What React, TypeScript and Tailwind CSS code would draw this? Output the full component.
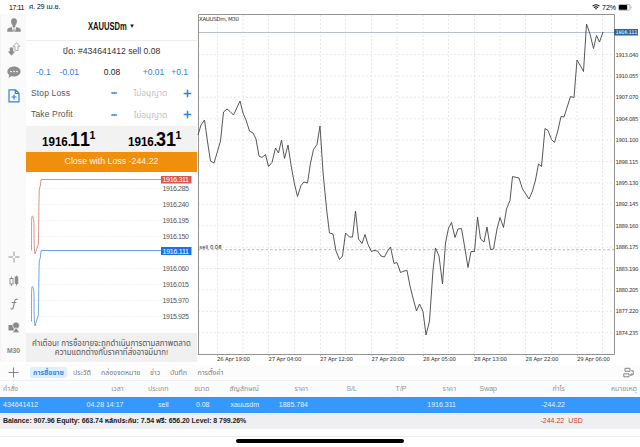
import React from "react";

const blue = "#2f82dc";

const gridX = [217.5, 243, 268.5, 294.5, 320.5, 345.5, 371.5, 397, 423, 448.5, 474.5, 500, 525.5, 551.5, 577, 602.5];

const priceLabels = [
  "1913.040", "1910.055", "1907.070", "1904.085", "1901.100", "1898.115", "1895.130",
  "1892.145", "1889.160", "1886.175", "1883.190", "1880.205", "1877.220", "1874.235",
];

const timeLabels = [
  { x: 217, text: "26 Apr 19:00" },
  { x: 268.5, text: "27 Apr 04:00" },
  { x: 320, text: "27 Apr 12:00" },
  { x: 371.5, text: "27 Apr 20:00" },
  { x: 423, text: "28 Apr 05:00" },
  { x: 474, text: "28 Apr 13:00" },
  { x: 525.5, text: "28 Apr 22:00" },
  { x: 577, text: "29 Apr 06:00" },
];

const closePrices =
  "198,135 201,125 204.5,120 208,145 210.5,161 214,163 217,153 220.5,141 223.5,112 227,109 230,111.5 233.5,115 240,101 243,113 246,120 249.5,131 253,133 256,139 259,156 262,157.5 265.5,154.5 268.5,166.5 272,162.5 275.5,148 278.5,153 281.5,140 284.5,158.5 288,145 291.5,168 294.5,184 297.5,196.5 301,185.5 304,182 307.5,183 310.5,163 313.5,149.5 317,144.5 320,126 323,172 325,193 327,213 329.5,233 333,234 336,251 339.5,259.5 342.5,256 345.5,233 349.5,237 352.5,237 355.5,211 358.5,239 362,243.5 365,234.5 368,244.5 371.5,251.5 374,250.5 377.5,251 381,256 384.5,257 387.5,251 390.5,247 394,263.5 397,262.5 400.5,272.5 404,271 407,270.5 410,286 413,298 416.5,311 419.5,304 423,311.5 426,335 429.5,321 433,270 435.5,248 439,256 442.5,284 445.5,243 448.5,228 451.5,222.5 455,237.5 458,229 461.5,228.5 464.5,246 468,267.5 471,251.5 474.5,251.5 477.5,217 480.5,239 484,242 487,227 490.5,249.5 493.5,249 497,229 500,217.5 503.5,227.5 506.5,209 510,200.5 512.5,176.5 519,178 522.5,189 529,199 532.5,191 535.5,180 538.5,164 541.5,166.5 545,128.5 548,130.5 551.5,139.5 554.5,142.5 558,130 561,116.5 564,117 567.5,106 570.5,96.5 574,97.5 577,60 580,65 583.5,71.5 586.5,24 590,34 593.5,48.5 596.5,35.5 599.5,42 603,32";

const tickLabels = [
  { y: 188.5, text: "1916.285" },
  { y: 204.5, text: "1916.240" },
  { y: 220.5, text: "1916.195" },
  { y: 236.5, text: "1916.150" },
  { y: 268.5, text: "1916.060" },
  { y: 284.5, text: "1916.015" },
  { y: 300.5, text: "1915.970" },
  { y: 316.5, text: "1915.925" },
];

function StatusBar() {
  return (
    <div className="flex h-[14px] shrink-0 items-center justify-between pl-[9px] pr-[8px] text-[7px] text-black">
      <div className="flex items-center gap-[5px] leading-none">
        <span className="tracking-[-0.4px]">17:11</span>
        <span className="text-[6.8px]">ศ. 29 เม.ย.</span>
      </div>
      <div className="flex items-center gap-[2px] leading-none">
        <svg width="8" height="6" viewBox="0 0 8 6" fill="none" stroke="#000">
          <path d="M.6 2.2Q4-.7 7.4 2.2M1.9 3.6Q4 1.9 6.1 3.6" strokeWidth="1.1" />
          <path d="M2.9 4.6Q4 3.8 5.1 4.6L4 5.8z" fill="#000" stroke="none" />
        </svg>
        <span>72%</span>
        <svg width="14" height="7" viewBox="0 0 14 7">
          <rect x=".4" y=".5" width="11.6" height="5.8" rx="1.4" fill="#fff" stroke="#999" strokeWidth=".7" />
          <rect x="1" y="1.1" width="8.2" height="4.6" rx=".7" fill="#000" />
          <path d="M12.8 2.4v2q.8-.3.8-1t-.8-1" fill="#999" />
        </svg>
      </div>
    </div>
  );
}

function Rail() {
  return (
    <div className="flex w-[26px] shrink-0 flex-col items-center justify-between border-l border-[#f4f4f4] bg-[#fafafa] pb-[3px] pt-[3px]">
      <div className="flex flex-col items-center gap-[7.5px]">
        <svg width="16" height="16" viewBox="0 0 16 16" fill="#8e8e8e">
          <path d="M8 1.2c-2.2 0-3.2 1.5-2.9 3.6.2 1.7.8 2.8 1.5 3.5v1.4L8 11l1.4-1.3V8.3c.7-.7 1.3-1.8 1.5-3.5.3-2.1-.7-3.6-2.9-3.6z" />
          <path d="M1.3 14.7v-2.2c.2-1.2 2.4-1.9 4.5-2.5L7 14.7zM14.7 14.7v-2.2c-.2-1.2-2.4-1.9-4.5-2.5L9 14.7zM7.6 11.4h.8l.4 3.3H7.2z" />
        </svg>
        <svg width="16" height="16" viewBox="0 0 16 16">
          <path d="M3.8 6.5h3.4v4h2L5.5 14.8 1.8 10.5h2z" fill="#8e8e8e" />
          <path d="M10.5 1.7l3.3 3.7H12v4H9v-4H7.2z" fill="#fff" stroke="#999" strokeWidth=".8" />
        </svg>
        <svg width="16" height="16" viewBox="0 0 16 16">
          <path d="M8 2.5c3.7 0 6.6 2.2 6.6 5s-2.9 5-6.6 5c-.9 0-1.7-.1-2.4-.4-.8.8-2 1.500-3.300 1.600.6-.7.9-1.600.9-2.700C2 10.100 1.400 8.900 1.400 7.500c0-2.800 2.900-5 6.600-5z" fill="#8e8e8e" />
          <g fill="#fff">
            <circle cx="5" cy="7.5" r=".85" />
            <circle cx="8" cy="7.5" r=".85" />
            <circle cx="11" cy="7.5" r=".85" />
          </g>
        </svg>
        <svg width="16" height="16" viewBox="0 0 16 16" fill="none" stroke={blue} strokeWidth="1.2">
          <path d="M3 1.800h6.500L13 5.300v8.500H3zM9.300 2v3.500H13M8 6.500v5M5.500 9h5" />
        </svg>
      </div>
      <div className="flex flex-col items-center gap-[7.5px]">
        <svg width="16" height="16" viewBox="0 0 16 16" stroke="#888" strokeWidth=".9">
          <path d="M8 2.500v4.500M8 9v4.500M2.500 8h4.500M9 8h4.500" />
        </svg>
        <svg width="16" height="16" viewBox="0 0 16 16" stroke="#888" strokeWidth=".9">
          <path d="M5.500 3.500v9.500" />
          <rect x="4" y="5.500" width="3" height="5.500" fill="#fafafa" />
          <path d="M10.500 2.500v10" />
          <rect x="9.200" y="4" width="2.600" height="6.500" fill="#888" />
        </svg>
        <svg width="16" height="16" viewBox="0 0 16 16" fill="none" stroke="#858585" strokeWidth="1.1" strokeLinecap="round">
          <path d="M11.200 3.500C9.900 2.600 9 3.500 8.700 5L7.300 11.300C7 12.900 6.100 13.500 5 12.800M6 6.500h4" />
        </svg>
        <svg width="16" height="16" viewBox="0 0 16 16" fill="#888">
          <rect x="2.500" y="5" width="5.300" height="5.500" />
          <circle cx="10" cy="5.500" r="3.400" stroke="#fafafa" strokeWidth=".7" />
          <path d="M10 7.500l3.800 5.200H6.400z" stroke="#fafafa" strokeWidth=".7" />
        </svg>
        <span className="flex h-[16px] items-center text-[6.8px] font-bold text-[#888]">M30</span>
      </div>
    </div>
  );
}

function StopRow({ label }: { label: string }) {
  return (
    <div className="flex h-[21.5px] items-center pl-[5px] pr-[5px] text-[8.5px] text-[#555]">
      <span className="w-[79px] tracking-[0.15px]">{label}</span>
      <svg width="8" height="8" viewBox="0 0 8 8" stroke={blue} strokeWidth="1.5"><path d="M1.300 4h5.600" /></svg>
      <span className="flex-1 text-center text-[8.3px] text-[#c0c0c0]">ไม่อนุญาต</span>
      <svg width="9" height="9" viewBox="0 0 9 9" stroke={blue} strokeWidth="1.5"><path d="M.7 4.500h7.600M4.500.7v7.600" /></svg>
    </div>
  );
}

function Quote({ big }: { big: string }) {
  return (
    <div className="flex h-[20px] w-[52px] items-baseline whitespace-nowrap font-bold leading-[20px] text-black">
      <span className="w-[28px] origin-left scale-x-[.86] text-[13.5px]">1916.</span>
      <span className="w-[19.5px] origin-left scale-x-[.92] text-[19.5px] [font-kerning:none]">{big}</span>
      <span className="self-start text-[10.5px] leading-[13px]">1</span>
    </div>
  );
}

function TickChart() {
  return (
    <svg width="171" height="161" viewBox="26 172 171 161" className="block">
      {tickLabels.map((t) => (
        <g key={t.text}>
          <path d={`M34 ${t.y}H160`} stroke="#e5e5e5" strokeWidth=".6" strokeDasharray="1.5 1.5" />
          <text x="162.5" y={t.y + 2.7} fontSize="7" fill="#555" textLength="26.5">{t.text}</text>
        </g>
      ))}
      <path d="M31.5 250.5C31.5 232 31.2 216 32.3 216S34 221 34 229s-.2 18 1 25l1.8-5 1.5-5c.6-16 .3-34 1-55l1.2-4 .5-5.500H161" fill="none" stroke="#cf7772" strokeWidth=".8" />
      <path d="M31.5 321.5C31.5 303 31.2 286.5 32.3 286.5S34 291 34 299s-.2 20 1 27l1.8-6 1.5-5c.6-16 .3-34 1-54l1.2-4 .5-6.500H161" fill="none" stroke="#4c91d7" strokeWidth=".8" />
      <rect x="161" y="176" width="30.5" height="7.5" fill="#d9574f" />
      <text x="162.5" y="182.3" fontSize="7" fill="#fff" textLength="26.5">1916.311</text>
      <rect x="161" y="247" width="30.5" height="8" fill="#1874dc" />
      <text x="162.5" y="253.6" fontSize="7" fill="#fff" textLength="26.5">1916.111</text>
    </svg>
  );
}

function OrderPanel() {
  return (
    <div className="flex w-[171px] shrink-0 flex-col bg-white">
      <div className="flex h-[26.5px] items-center border-b border-[#eee] pl-[62px] text-[10px] font-bold text-[#111]">
        <span className="w-[41px] origin-left scale-x-[.76]">XAUUSDm</span>
        <span className="text-[6px]">▼</span>
      </div>
      <div className="flex h-[21px] items-center justify-center text-[8.6px] text-[#333]">ปิด: #434641412 sell 0.08</div>
      <div className="flex h-[21px] items-center justify-between pl-[10px] pr-[9px] text-[8.5px] text-[#2f82dc]">
        <div className="flex w-[50px] gap-[9px]">
          <span>-0.1</span>
          <span>-0.01</span>
        </div>
        <span className="text-[#222]">0.08</span>
        <div className="flex w-[50px] justify-end gap-[7px]">
          <span>+0.01</span>
          <span>+0.1</span>
        </div>
      </div>
      <StopRow label="Stop Loss" />
      <StopRow label="Take Profit" />
      <div className="flex h-[26.5px] items-center justify-between bg-[#f2f2f2] pl-[16px] pr-[17px]">
        <Quote big="11" />
        <Quote big="31" />
      </div>
      <div className="flex h-[20px] items-center justify-center bg-[#ef8f0b] text-[8.8px] text-[#fff6e8]">
        Close with Loss -244.22
      </div>
      <TickChart />
      <div className="flex flex-1 flex-col items-center justify-center bg-[#f0f0f0] text-[7.9px] leading-[9px] text-[#555]">
        <span className="whitespace-nowrap">คำเตือน! การซื้อขายจะถูกดำเนินการตามสภาพตลาด</span>
        <span className="whitespace-nowrap">ความแตกต่างกับราคาที่ส่งอาจมีมาก!</span>
      </div>
    </div>
  );
}

function PriceChart() {
  return (
    <svg width="443" height="351" viewBox="197 14 443 351" className="block shrink-0 font-['DejaVu_Sans','Liberation_Sans',sans-serif]">
      <g stroke="#e2e2e2" strokeWidth=".8" strokeDasharray="2 2">
        {gridX.map((x) => <path key={x} d={`M${x} 15V354`} />)}
        {priceLabels.map((p, i) => <path key={p} d={`M198 ${54.5 + i * 21.4}H614`} />)}
      </g>
      <path d="M198 32.500H614" stroke="#b9c0ca" />
      <path d="M198 249.700H614" stroke="#b5bdb8" strokeDasharray="2.5 2" />
      <path d="M198.500 354V14.500H614.500V354.500H198z" fill="none" stroke="#929292" />
      <polyline points={closePrices} fill="none" stroke="#444" strokeWidth=".9" />
      <text x="199" y="20.5" fontSize="5.5" fill="#333" textLength="40">XAUUSDm, M30</text>
      <text x="199.5" y="249" fontSize="5.3" fill="#333" textLength="22">sell 0.08</text>
      {priceLabels.map((p, i) => (
        <text key={p} x="615.5" y={56.5 + i * 21.4} fontSize="5.4" fill="#333" textLength="23">{p}</text>
      ))}
      <rect x="614" y="29" width="24" height="6.5" fill="#2c6498" />
      <text x="615.5" y="34.2" fontSize="5.2" fill="#fff" textLength="22">1916.111</text>
      {timeLabels.map((t) => (
        <g key={t.text}>
          <path d={`M${t.x + 0.5} 354v2`} stroke="#999" strokeWidth=".7" />
          <text x={t.x} y="360.5" fontSize="5.4" fill="#333" textLength="33">{t.text}</text>
        </g>
      ))}
    </svg>
  );
}

function Tabs() {
  return (
    <div className="flex h-[16px] shrink-0 items-center border-b border-[#f0f0f0] bg-[#fcfcfc] text-[7px] leading-none text-[#7c7c7c]">
      <div className="flex w-[30px] justify-center pr-[4px]">
        <svg width="11" height="11" viewBox="0 0 11 11" stroke="#777" strokeWidth=".9"><path d="M.5 5.500h10M5.500.5v10" /></svg>
      </div>
      <div className="flex h-[11px] w-[37px] items-center justify-center rounded-[2px] bg-[#dfefff] font-bold text-[#3389e5]">การซื้อขาย</div>
      <span className="ml-[6px] w-[28px]">ประวัติ</span>
      <span className="w-[49px]">กล่องจดหมาย</span>
      <span className="w-[20px]">ข่าว</span>
      <span className="w-[27.5px]">บันทึก</span>
      <span>การตั้งค่า</span>
      <svg className="ml-auto mr-[6px]" width="11" height="11" viewBox="0 0 11 11" fill="none" stroke="#777" strokeWidth=".9">
        <path d="M2 4.300V1.300h5v3H2M.8 6.800h5.200v3H.8zM8 3.800h2.200v4H7.500M8.600 6.500L7.300 7.800l1.300 1.300" />
      </svg>
    </div>
  );
}

const columns = "grid grid-cols-[60px_63.5px_45px_41px_49.5px_49px_49px_49.5px_49.5px_41px_68px_72px] h-[16px] shrink-0 items-center whitespace-nowrap text-right";

function Trades() {
  const header = ["คำสั่ง", "เวลา", "ประเภท", "ขนาด", "สัญลักษณ์", "ราคา", "S/L", "T/P", "ราคา", "Swap", "กำไร", "หมายเหตุ"];
  const row = ["434641412", "04.28 14:17", "sell", "0.08", "xauusdm", "1885.784", "", "", "1916.311", "", "-244.22", ""];
  return (
    <>
      <div className={`${columns} bg-[#fbfcfd] text-[7px] text-[#929292]`}>
        {header.map((h, i) => <span key={i} className="first:pl-[3px] first:text-left">{h}</span>)}
      </div>
      <div className={`${columns} bg-[#3598fd] text-[7px] text-[#e5f2ff]`}>
        {row.map((c, i) => <span key={i} className="first:pl-[3px] first:text-left">{c}</span>)}
      </div>
      <div className="flex h-[16px] shrink-0 items-center bg-[#efeff1] pl-[3px] text-[7px] font-bold text-[#222]">
        <span className="w-[537.5px] whitespace-nowrap tracking-[-0.06px]">
          Balance: 907.96 Equity: 663.74 หลักประกัน: 7.54 ฟรี: 656.20 Level: 8 799.26%
        </span>
        <span className="font-normal text-[#cf3b34]">-244.22&nbsp; USD</span>
      </div>
    </>
  );
}

export default function App() {
  return (
    <div className="flex h-[447px] w-[640px] flex-col overflow-hidden bg-white font-['Liberation_Sans','Noto_Sans_Thai','Noto_Sans',sans-serif]">
      <StatusBar />
      <div className="flex h-[351px] shrink-0">
        <div className="flex h-[348px]">
          <Rail />
          <OrderPanel />
        </div>
        <PriceChart />
      </div>
      <Tabs />
      <Trades />
      <div className="flex flex-1 flex-col items-center">
        <div className="h-[8px] w-full border-b border-[#eee]" />
        <div className="mt-[2px] h-[4px] w-[168px] rounded-full bg-black" />
      </div>
    </div>
  );
}
